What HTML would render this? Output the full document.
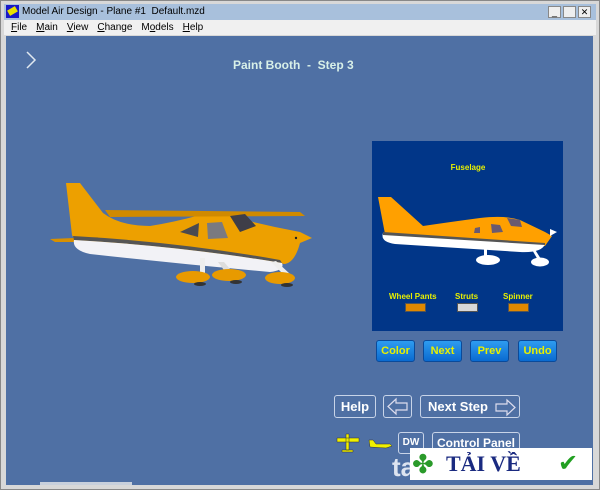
<!DOCTYPE html>
<html><head><style>
*{margin:0;padding:0;box-sizing:border-box}
body{width:600px;height:490px;background:#d4d4d4;font-family:"Liberation Sans",sans-serif;position:relative;overflow:hidden}
.abs{position:absolute}
.btn{position:absolute;border:1px solid #c8d4e8;border-radius:3px;color:#fff;font-size:13px;font-weight:bold;text-align:center}
.bb{position:absolute;width:39px;height:22px;background:linear-gradient(#2e9cf0,#0a6ad0);border:1px solid #0a4a9a;border-radius:3px;color:#e8f000;font-weight:bold;font-size:11px;text-align:center;line-height:20px}
</style></head><body>
<div class="abs" style="left:0;top:0;width:600px;height:490px;border:1px solid #888;background:#d8d8d8"></div>
<div class="abs" style="left:4px;top:4px;width:592px;height:16px;background:#a8c0dc"></div>
<div class="abs" style="left:6px;top:5px;width:13px;height:13px;background:#1818c8"><div style="position:absolute;left:2px;top:3px;width:9px;height:6px;background:#e8e000;transform:rotate(-30deg)"></div></div>
<div class="abs" style="left:22px;top:6px;font-size:10px;color:#000">Model Air Design - Plane #1&nbsp; Default.mzd</div>
<div class="abs" style="left:548px;top:6px;width:13px;height:12px;background:#eee;border:1px solid #888;font-size:9px;text-align:center;line-height:10px">_</div>
<div class="abs" style="left:563px;top:6px;width:13px;height:12px;background:#eee;border:1px solid #888"></div>
<div class="abs" style="left:578px;top:6px;width:13px;height:12px;background:#eee;border:1px solid #888;font-size:9px;text-align:center;line-height:11px">✕</div>
<div class="abs" style="left:4px;top:20px;width:592px;height:15px;background:#f0f0f0"></div>
<div class="abs" style="left:11px;top:22px;font-size:10px;word-spacing:0">
<span style="margin-right:9px"><u>F</u>ile</span><span style="margin-right:9px"><u>M</u>ain</span><span style="margin-right:9px"><u>V</u>iew</span><span style="margin-right:9px"><u>C</u>hange</span><span style="margin-right:9px">M<u>o</u>dels</span><span><u>H</u>elp</span></div>
<div class="abs" style="left:6px;top:36px;width:587px;height:449px;background:#4f70a4"></div>
<svg class="abs" style="left:24px;top:50px" width="14" height="20"><path d="M3 2 L11 10 L3 18" stroke="#e0e8f0" stroke-width="1.5" fill="none"/></svg>
<div class="abs" style="left:233px;top:58px;font-size:12px;font-weight:bold;color:#d8f0e8">Paint Booth&nbsp; - &nbsp;Step 3</div>
<!-- main plane, page coords -->
<svg class="abs" style="left:0;top:0" width="600" height="490">
<path d="M66 183 L80 183 L103 213 Q120 226 150 226 Q175 222 200 215 L228 212 L253 222 L275 227 L300 232 L312 238 L300 243 Q295 262 285 264 L200 255 L75 241 L72 235 Z" fill="#eda000"/>
<path d="M105 210 L300 212 L305 216 L110 217 Z" fill="#d08a00"/>
<path d="M50 239 L98 237 L100 242 L55 242 Z" fill="#d89000"/>
<path d="M73 236 Q180 242 280 260 L282 263 Q180 246 74 240 Z" fill="#555"/>
<path d="M74 240 Q180 246 282 263 Q285 270 270 272 Q180 264 90 254 Q72 250 74 240 Z" fill="#f2f2f6"/>
<path d="M180 232 L199 223 L198 237 Z" fill="#4a4a50"/>
<path d="M207 223 L222 222 L228 238 L208 239 Z" fill="#7a7a80"/>
<path d="M230 216 L245 214 L256 226 L240 232 Z" fill="#3e3e48"/>
<circle cx="296" cy="238" r="1.2" fill="#222"/>
<rect x="200" y="258" width="5" height="19" fill="#eee"/>
<path d="M218 262 L224 262 L235 275 L229 277 Z" fill="#ddd"/>
<path d="M271 262 L276 261 L290 274 L285 276 Z" fill="#eee"/>
<ellipse cx="193" cy="277" rx="17" ry="6" fill="#e89a00"/><ellipse cx="229" cy="275" rx="17" ry="6" fill="#e89a00"/><ellipse cx="280" cy="278" rx="15" ry="6" fill="#e89a00"/>
<ellipse cx="200" cy="284" rx="6" ry="2" fill="#333"/><ellipse cx="236" cy="282" rx="6" ry="2" fill="#333"/><ellipse cx="287" cy="285" rx="6" ry="2" fill="#333"/>
</svg>
<!-- panel -->
<div class="abs" style="left:372px;top:141px;width:191px;height:190px;background:#013688"></div>
<div class="abs" style="left:372px;top:163px;width:230px;text-align:center;font-size:8px;font-weight:bold;color:#e8f000;width:230px;left:353px">Fuselage</div>
<svg class="abs" style="left:0;top:0" width="600" height="490">
<path d="M378 197 L391 197 L423 226 Q450 222 480 218 Q505 215 520 220 L545 232 L552 236 L545 246 L500 244 L385 234 Z" fill="#ffa000"/>
<path d="M383 233 L545 244 Q542 253 520 252 L395 244 Q380 242 383 233 Z" fill="#fff"/>
<path d="M383 232 L545 243 L545 245 L383 235 Z" fill="#555"/>
<path d="M475 228 L480 227 L480 233 L474 233 Z M491 224 L500 225 L503 232 L492 233 Z M507 218 L520 220 L522 227 L511 226 Z" fill="#6a5a70"/>
<path d="M550 229 L557 232 L550 236 Z" fill="#fff"/>
<rect x="484" y="248" width="3" height="12" fill="#fff"/><path d="M531 248 L534 248 L541 259 L538 260 Z" fill="#fff"/>
<ellipse cx="488" cy="260" rx="12" ry="5" fill="#fff"/><ellipse cx="540" cy="262" rx="9" ry="4.5" fill="#fff"/>
</svg>
<div class="abs" style="left:389px;top:292px;font-size:8px;font-weight:bold;color:#e8f000">Wheel Pants</div>
<div class="abs" style="left:455px;top:292px;font-size:8px;font-weight:bold;color:#e8f000">Struts</div>
<div class="abs" style="left:503px;top:292px;font-size:8px;font-weight:bold;color:#e8f000">Spinner</div>
<div class="abs" style="left:405px;top:303px;width:21px;height:9px;background:#e08800;border:1px solid #555"></div>
<div class="abs" style="left:457px;top:303px;width:21px;height:9px;background:#d8d8d8;border:1px solid #555"></div>
<div class="abs" style="left:508px;top:303px;width:21px;height:9px;background:#e08800;border:1px solid #555"></div>
<div class="bb" style="left:376px;top:340px">Color</div>
<div class="bb" style="left:423px;top:340px">Next</div>
<div class="bb" style="left:470px;top:340px">Prev</div>
<div class="bb" style="left:518px;top:340px">Undo</div>
<div class="btn" style="left:334px;top:395px;width:42px;height:23px;line-height:21px">Help</div>
<div class="btn" style="left:383px;top:395px;width:29px;height:23px"><svg width="27" height="21"><path d="M4 10.5 L12 3 L12 7 L23 7 L23 14 L12 14 L12 18 Z" fill="none" stroke="#dde" stroke-width="1.2"/></svg></div>
<div class="btn" style="left:420px;top:395px;width:100px;height:23px;line-height:21px;text-align:left;padding-left:7px">Next Step<svg style="position:absolute;left:71px;top:1px" width="27" height="21"><path d="M23 10.5 L15 3 L15 7 L4 7 L4 14 L15 14 L15 18 Z" fill="none" stroke="#dde" stroke-width="1.2"/></svg></div>
<div class="btn" style="left:398px;top:432px;width:26px;height:22px;line-height:20px;font-size:10px">DW</div>
<div class="btn" style="left:432px;top:432px;width:88px;height:22px;line-height:20px;font-size:12px">Control Panel</div>
<svg class="abs" style="left:334px;top:432px" width="60" height="24">
<path d="M3 6 L25 6 L25 10 L3 10 Z M12 2 L15 2 L15 18 L12 18 Z M8 18 L19 18 L19 20 L8 20 Z" fill="#f0f000" stroke="#333" stroke-width=".5"/>
<path d="M35 8 L39 8 L42 12 L56 12 L58 14 L52 16 L36 15 Z" fill="#f0f000" stroke="#333" stroke-width=".5"/>
</svg>
<div class="abs" style="left:392px;top:452px;font-size:26px;font-weight:bold;color:#dde4f0">ta</div>
<div class="abs" style="left:410px;top:448px;width:182px;height:32px;background:#fff"></div>
<div class="abs" style="left:412px;top:449px;font-size:26px;color:#2a9a2a">✤</div>
<div class="abs" style="left:446px;top:451px;font-size:22px;font-weight:bold;color:#1a2a80;font-family:'Liberation Serif',serif">TẢI VỀ</div>
<div class="abs" style="left:558px;top:449px;font-size:24px;color:#22a022">✔</div>
<div class="abs" style="left:40px;top:482px;width:92px;height:3px;background:#c8d0dc"></div>
</body></html>
